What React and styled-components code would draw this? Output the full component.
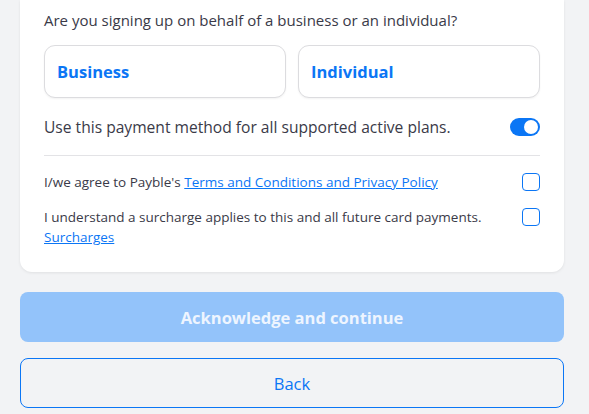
import React, { useState } from 'react';
import styled, { createGlobalStyle } from 'styled-components';

const GlobalStyle = createGlobalStyle`
  html, body {
    margin: 0;
    padding: 0;
    background: #f2f3f5;
    font-family: "Open Sans", "Lato", sans-serif;
    color: #3a3a48;
  }
`;

const BLUE = '#0b76f5';

const Page = styled.div`
  padding: 0 25px 0 20px;
`;

const Card = styled.div`
  background: #fff;
  border-radius: 0 0 12px 12px;
  box-shadow: 0 1px 3px rgba(0, 0, 0, 0.08);
  padding: 9px 24px 25px;
`;

const Question = styled.p`
  margin: 0;
  font-size: 15px;
  line-height: 22px;
`;

const Options = styled.div`
  display: grid;
  grid-template-columns: 1fr 1fr;
  gap: 12px;
  margin-top: 14px;
`;

const Option = styled.button`
  height: 53px;
  border: 1px solid #dcdcdf;
  border-radius: 11px;
  background: #fff;
  box-shadow: 0 1px 2px rgba(0, 0, 0, 0.05);
  text-align: left;
  padding: 0 12px;
  font-family: inherit;
  font-size: 16.5px;
  font-weight: 700;
  color: ${BLUE};
  cursor: pointer;
`;

const ToggleRow = styled.div`
  display: flex;
  align-items: center;
  justify-content: space-between;
  height: 26px;
  margin-top: 16px;
  font-size: 15.6px;
`;

const Switch = styled.span`
  position: relative;
  width: 30px;
  height: 18px;
  border-radius: 9px;
  background: ${p => (p.$on ? BLUE : '#cfd3d8')};
  cursor: pointer;

  &::after {
    content: '';
    position: absolute;
    top: 2px;
    left: ${p => (p.$on ? '14px' : '2px')};
    width: 14px;
    height: 14px;
    border-radius: 50%;
    background: #fff;
  }
`;

const Divider = styled.hr`
  border: 0;
  border-top: 1px solid #e3e3e6;
  margin: 15px 0 0;
`;

const CheckRow = styled.label`
  display: flex;
  align-items: ${p => (p.$top ? 'flex-start' : 'center')};
  justify-content: space-between;
  gap: 30px;
  margin-top: ${p => p.$gap}px;
  font-size: 13.5px;
  line-height: 20px;
  cursor: pointer;
`;

const Box = styled.span`
  flex: none;
  width: 16px;
  height: 16px;
  border: 1.5px solid ${BLUE};
  border-radius: 4px;
  margin-top: ${p => (p.$top ? '1px' : '0')};
  background: ${p => (p.$checked ? BLUE : '#fff')};
`;

const Link = styled.a`
  color: ${BLUE};
  text-decoration: underline;
`;

const Actions = styled.div`
  display: flex;
  flex-direction: column;
  gap: 16px;
  margin-top: 20px;
`;

const Button = styled.button`
  height: 50px;
  border-radius: 8px;
  font-family: inherit;
  font-size: 16.5px;
  font-weight: ${p => (p.$primary ? 700 : 500)};
  color: ${p => (p.$primary ? '#eef5ff' : BLUE)};
  background: ${p => (p.$primary ? '#93c3fa' : 'transparent')};
  border: ${p => (p.$primary ? '0' : `1.5px solid ${BLUE}`)};
  cursor: pointer;
`;

export default function App() {
  const [allPlans, setAllPlans] = useState(true);
  const [checks, setChecks] = useState([false, false]);

  const flip = idx => {
    const next = checks.slice();
    next[idx] = !next[idx];
    setChecks(next);
  };

  return (
    <Page>
      <GlobalStyle />
      <Card>
        <Question>Are you signing up on behalf of a business or an individual?</Question>
        <Options>
          <Option>Business</Option>
          <Option>Individual</Option>
        </Options>
        <ToggleRow>
          <span>Use this payment method for all supported active plans.</span>
          <Switch $on={allPlans} onClick={() => setAllPlans(!allPlans)} />
        </ToggleRow>
        <Divider />
        <CheckRow $gap={16} onClick={() => flip(0)}>
          <span>
            I/we agree to Payble's <Link href="#">Terms and Conditions and Privacy Policy</Link>
          </span>
          <Box $checked={checks[0]} />
        </CheckRow>
        <CheckRow $gap={15} $top onClick={() => flip(1)}>
          <span>
            I understand a surcharge applies to this and all future card payments.
            <br />
            <Link href="#">Surcharges</Link>
          </span>
          <Box $top $checked={checks[1]} />
        </CheckRow>
      </Card>
      <Actions>
        <Button $primary disabled>Acknowledge and continue</Button>
        <Button>Back</Button>
      </Actions>
    </Page>
  );
}
